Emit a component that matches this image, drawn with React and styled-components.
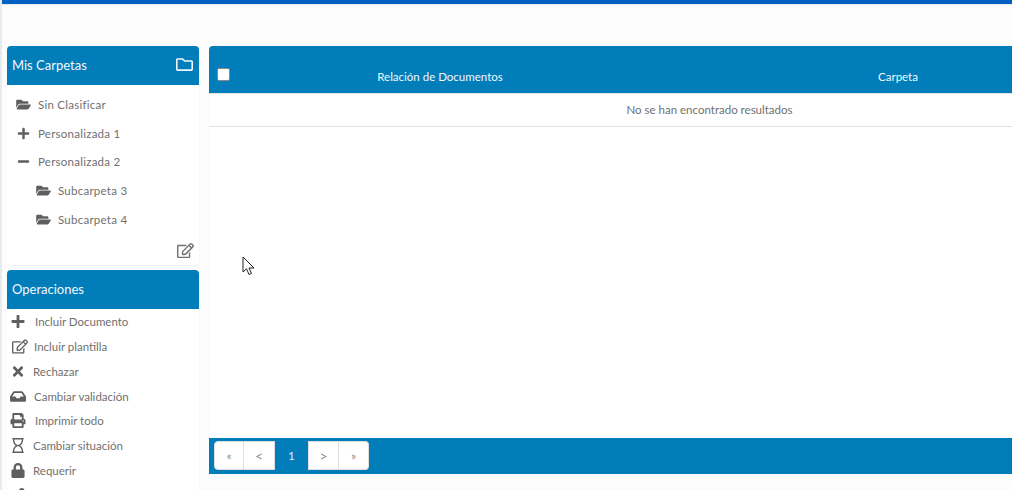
import React from 'react';
import styled, { createGlobalStyle } from 'styled-components';
import {
  FaRegFolder,
  FaFolderOpen,
  FaPlus,
  FaMinus,
  FaRegEdit,
  FaTimes,
  FaInbox,
  FaPrint,
  FaRegHourglass,
  FaLock,
  FaShareAlt,
} from 'react-icons/fa';

const GlobalStyle = createGlobalStyle`
  html, body {
    margin: 0;
    height: 490px;
    overflow: hidden;
    background: #fcfcfc;
    font-family: "Lato", "Open Sans", sans-serif;
  }
`;

const Page = styled.div`
  position: relative;
  width: 1012px;
  height: 490px;
  overflow: hidden;
  border-left: 2px solid #e6ebf2;
  box-sizing: border-box;
`;

const TopBar = styled.div`
  height: 4px;
  margin-left: -2px;
  background: #0161c2;
  border-bottom: 1px solid #e6ebf2;
`;

const Body = styled.div`
  display: flex;
  gap: 10px;
  padding: 41px 0 0 5px;
`;

const Sidebar = styled.aside`
  width: 192px;
  flex: none;
  display: flex;
  flex-direction: column;
  gap: 5px;
`;

const Panel = styled.section`
  background: #fff;
  border-radius: 4px;
  box-shadow: 0 1px 2px rgba(0, 0, 0, 0.05);
`;

const PanelHeader = styled.header`
  height: 39px;
  display: flex;
  align-items: center;
  justify-content: space-between;
  padding: 0 6px ${(p) => p.$lift}px 5px;
  box-sizing: border-box;
  background: #017dba;
  border-radius: 4px 4px 0 0;
  color: #f2f8fb;
  font-size: 13px;
  svg {
    font-size: 17px;
  }
`;

const Tree = styled.ul`
  list-style: none;
  margin: 0;
  padding: 5px 0 0;
`;

const TreeRow = styled.li`
  height: 28.75px;
  display: flex;
  align-items: center;
  gap: 7px;
  padding-left: ${(p) => (p.$nested ? 29 : 9)}px;
  color: #707070;
  font-size: 11.5px;
  letter-spacing: 0.25px;
  svg {
    width: 15px;
    flex: none;
    font-size: 13px;
    color: #5f5f5f;
  }
`;

const PanelTools = styled.div`
  height: 31px;
  display: flex;
  align-items: center;
  justify-content: flex-end;
  padding: 3px 5px 0 0;
  box-sizing: border-box;
  color: #707070;
  font-size: 17px;
`;

const OpsList = styled.ul`
  list-style: none;
  margin: 0;
  padding: 0.5px 0 0;
  background: #fff;
`;

const OpRow = styled.li`
  height: 24.8px;
  display: flex;
  align-items: center;
  padding-left: ${(p) => p.$inset || 3}px;
  color: #707070;
  font-size: 11.5px;
  svg {
    width: 16px;
    flex: none;
    font-size: ${(p) => p.$size || 15}px;
    color: #5f5f5f;
  }
  span {
    margin-left: ${(p) => p.$gap}px;
  }
`;

const Main = styled.main`
  flex: 1;
  min-width: 0;
  display: flex;
  flex-direction: column;
  height: 428px;
  overflow: hidden;
`;

const Table = styled.div`
  flex: 1;
  width: 1001px;
  display: flex;
  flex-direction: column;
  background: #fff;
  border-radius: 4px 0 0 0;
  overflow: hidden;
`;

const TableHead = styled.div`
  height: 48px;
  flex: none;
  display: grid;
  grid-template-columns: 24px 414px 502px 1fr;
  align-items: end;
  padding: 0 0 10px;
  box-sizing: border-box;
  background: #017dba;
  border-bottom: 1px solid #e4e4e4;
  color: #f2f8fb;
  font-size: 11.5px;
`;

const HeadCheck = styled.div`
  width: 13px;
  height: 13px;
  margin: 0 0 2px 8px;
  box-sizing: border-box;
  background: #fff;
  border: 1px solid #8a8a8a;
  border-radius: 2px;
`;

const HeadCell = styled.div`
  text-align: center;
`;

const EmptyRow = styled.div`
  height: 33px;
  flex: none;
  box-sizing: border-box;
  display: flex;
  align-items: center;
  justify-content: center;
  padding-bottom: 1px;
  border-bottom: 1px solid #e2e2e2;
  color: #707070;
  font-size: 11.5px;
`;

const Footer = styled.footer`
  height: 36px;
  flex: none;
  display: flex;
  align-items: center;
  box-sizing: border-box;
  padding: 0 0 1px 5px;
  background: #017dba;
`;

const Pager = styled.nav`
  display: flex;
  height: 29px;
`;

const PageLink = styled.a`
  width: ${(p) => p.$w}px;
  display: flex;
  align-items: center;
  justify-content: center;
  box-sizing: border-box;
  background: ${(p) => (p.$active ? '#017dba' : '#fff')};
  color: ${(p) => (p.$active ? '#e6f3f9' : '#8a8a8a')};
  border: ${(p) => (p.$active ? 'none' : '1px solid #dedede')};
  border-left-width: ${(p) => (p.$first ? 1 : 0)}px;
  font-size: ${(p) => p.$size || 11}px;
  &:first-child {
    border-radius: 4px 0 0 4px;
  }
  &:last-child {
    border-radius: 0 4px 4px 0;
  }
`;

const Cursor = styled.svg`
  position: absolute;
  left: 240px;
  top: 256px;
`;

const folders = [
  { label: 'Sin Clasificar', icon: <FaFolderOpen /> },
  { label: 'Personalizada 1', icon: <FaPlus /> },
  { label: 'Personalizada 2', icon: <FaMinus /> },
  { label: 'Subcarpeta 3', icon: <FaFolderOpen />, nested: true },
  { label: 'Subcarpeta 4', icon: <FaFolderOpen />, nested: true },
];

const operations = [
  { label: 'Incluir Documento', icon: <FaPlus />, gap: 9 },
  { label: 'Incluir plantilla', icon: <FaRegEdit />, size: 17, gap: 6, inset: 5 },
  { label: 'Rechazar', icon: <FaTimes />, gap: 7 },
  { label: 'Cambiar validación', icon: <FaInbox />, size: 17, gap: 8 },
  { label: 'Imprimir todo', icon: <FaPrint />, gap: 9 },
  { label: 'Cambiar situación', icon: <FaRegHourglass />, gap: 7 },
  { label: 'Requerir', icon: <FaLock />, gap: 7 },
  { label: '', icon: <FaShareAlt />, gap: 7 },
];

const App = () => (
  <>
    <GlobalStyle />
    <Page>
      <TopBar />
      <Body>
        <Sidebar>
          <Panel>
            <PanelHeader $lift={2}>
              Mis Carpetas
              <FaRegFolder />
            </PanelHeader>
            <Tree>
              {folders.map(({ label, icon, nested }) => (
                <TreeRow key={label} $nested={nested}>
                  {icon}
                  {label}
                </TreeRow>
              ))}
            </Tree>
            <PanelTools>
              <FaRegEdit />
            </PanelTools>
          </Panel>
          <Panel>
            <PanelHeader $lift={0}>Operaciones</PanelHeader>
            <OpsList>
              {operations.map(({ label, icon, size, gap, inset }) => (
                <OpRow key={label || 'more'} $size={size} $gap={gap} $inset={inset}>
                  {icon}
                  <span>{label}</span>
                </OpRow>
              ))}
            </OpsList>
          </Panel>
        </Sidebar>
        <Main>
          <Table>
            <TableHead>
              <HeadCheck />
              <HeadCell>Relación de Documentos</HeadCell>
              <HeadCell>Carpeta</HeadCell>
            </TableHead>
            <EmptyRow>No se han encontrado resultados</EmptyRow>
          </Table>
          <Footer>
            <Pager>
              <PageLink $first $w={30}>«</PageLink>
              <PageLink $w={31} $size={14}>&lt;</PageLink>
              <PageLink $active $w={33}>1</PageLink>
              <PageLink $first $w={31} $size={14}>&gt;</PageLink>
              <PageLink $w={30}>»</PageLink>
            </Pager>
          </Footer>
        </Main>
      </Body>
      <Cursor width="14" height="20" viewBox="0 0 14 20">
        <path d="M1 1 L1 16 L4.5 12.8 L7 18.5 L9.5 17.4 L7 12 L12 12 Z" fill="#fff" stroke="#222" strokeWidth="1" />
      </Cursor>
    </Page>
  </>
);

export default App;
